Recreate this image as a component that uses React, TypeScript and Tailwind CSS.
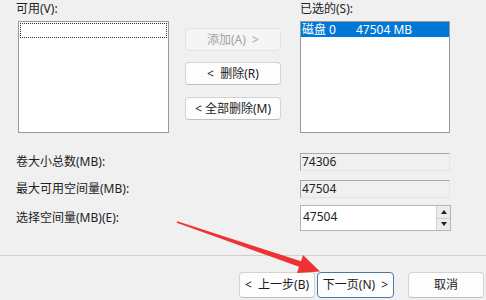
import React from "react";

const font = { fontFamily: '"Noto Sans", "Noto Sans CJK SC", sans-serif' };

function Btn({ children, disabled, def, w = "w-[96px]", h = "h-[23px]" }: { children: React.ReactNode; disabled?: boolean; def?: boolean; w?: string; h?: string }) {
  const cls = disabled
    ? "bg-[#f5f5f5] border-[#e3e3e3] text-[#a3a3a3]"
    : def
    ? "bg-[#fdfdfd] border-[#4a78a6] text-[#1b1b1b]"
    : "bg-[#fdfdfd] border-[#d3d3d3] border-b-[#c0c0c0] text-[#1b1b1b]";
  return (
    <div className={`${w} ${h} ${cls} border rounded-[4px] flex items-center justify-center text-[12px] leading-none whitespace-pre`}>
      {children}
    </div>
  );
}

export default function App() {
  return (
    <div className="relative w-[486px] h-[300px] bg-[#f0f0f0] overflow-hidden text-[#222]" style={font}>
      <div className="flex pl-[16px]">
        <div className="flex flex-col">
          <div className="h-[16px] text-[12px] leading-[16px] pt-[1px]">可用(V):</div>
          <div className="ml-[2px] mt-[5px] w-[151px] h-[112px] bg-white border border-[#9a9a9a] p-[1px]">
            <div className="h-[15px] border border-dotted border-[#333]" />
          </div>
        </div>
        <div className="flex flex-col ml-[16px] pt-[28px]">
          <Btn disabled>{"添加(A)  >"}</Btn>
          <div className="mt-[11px]"><Btn>{"<  删除(R)"}</Btn></div>
          <div className="mt-[12px]"><Btn>{"< 全部删除(M)"}</Btn></div>
        </div>
        <div className="flex flex-col ml-[19px]">
          <div className="h-[16px] text-[12px] leading-[16px] pt-[1px]">已选的(S):</div>
          <div className="mt-[5px] w-[150px] h-[112px] bg-white border border-[#9a9a9a]">
            <div className="h-[15px] bg-[#0078d7] text-white text-[12px] leading-[15px] flex pl-[1px]">
              <span className="w-[54px]">磁盘 0</span>
              <span>47504 MB</span>
            </div>
          </div>
        </div>
      </div>

      <div className="mt-[20px] flex flex-col">
        <div className="flex items-center h-[18px]">
          <div className="w-[300px] pl-[16px] text-[12px]">卷大小总数(MB):</div>
          <div className="w-[150px] h-[18px] bg-[#f0f0f0] border border-[#a8a8a8] border-r-[#e4e4e4] border-b-[#e4e4e4] text-[12px] leading-[16px] pl-[1px]">74306</div>
        </div>
        <div className="flex items-center h-[18px] mt-[9px]">
          <div className="w-[300px] pl-[16px] text-[12px]">最大可用空间量(MB):</div>
          <div className="w-[150px] h-[18px] bg-[#f0f0f0] border border-[#a8a8a8] border-r-[#e4e4e4] border-b-[#e4e4e4] text-[12px] leading-[16px] pl-[1px]">47504</div>
        </div>
        <div className="flex items-center h-[26px] mt-[7px]">
          <div className="w-[300px] pl-[16px] text-[12px]">选择空间量(MB)(E):</div>
          <div className="w-[151px] h-[26px] bg-white border border-[#b5b5b5] flex">
            <div className="flex-1 text-[12px] leading-[22px] pl-[2px]">47504</div>
            <div className="w-[14px] flex flex-col border-l border-[#cfcfcf]">
              <div className="flex-1 bg-[#ececec] border-b border-[#cfcfcf] flex items-center justify-center">
                <svg width="6" height="4" viewBox="0 0 6 4"><path d="M0 4 L3 0 L6 4 Z" fill="#222" /></svg>
              </div>
              <div className="flex-1 bg-[#ececec] flex items-center justify-center">
                <svg width="6" height="4" viewBox="0 0 6 4"><path d="M0 0 L3 4 L6 0 Z" fill="#222" /></svg>
              </div>
            </div>
          </div>
        </div>
      </div>

      <div className="mt-[24px] h-px bg-[#cfcfcf]" />

      <div className="flex mt-[16px] pl-[239px]">
        <Btn w="w-[76px]" h="h-[26px]">{"<  上一步(B)"}</Btn>
        <div className="ml-[2px]"><Btn def w="w-[77px]" h="h-[26px]">{"下一页(N)  >"}</Btn></div>
        <div className="ml-[14px]"><Btn w="w-[76px]" h="h-[26px]">取消</Btn></div>
      </div>

      <svg className="absolute left-0 top-0 pointer-events-none" width="486" height="300" viewBox="0 0 486 300">
        <polygon points="177.3,221.2 301,261.2 303,255 320,271.5 297,273 299,266.8 176.7,222.8" fill="#ee3232" />
      </svg>
    </div>
  );
}
